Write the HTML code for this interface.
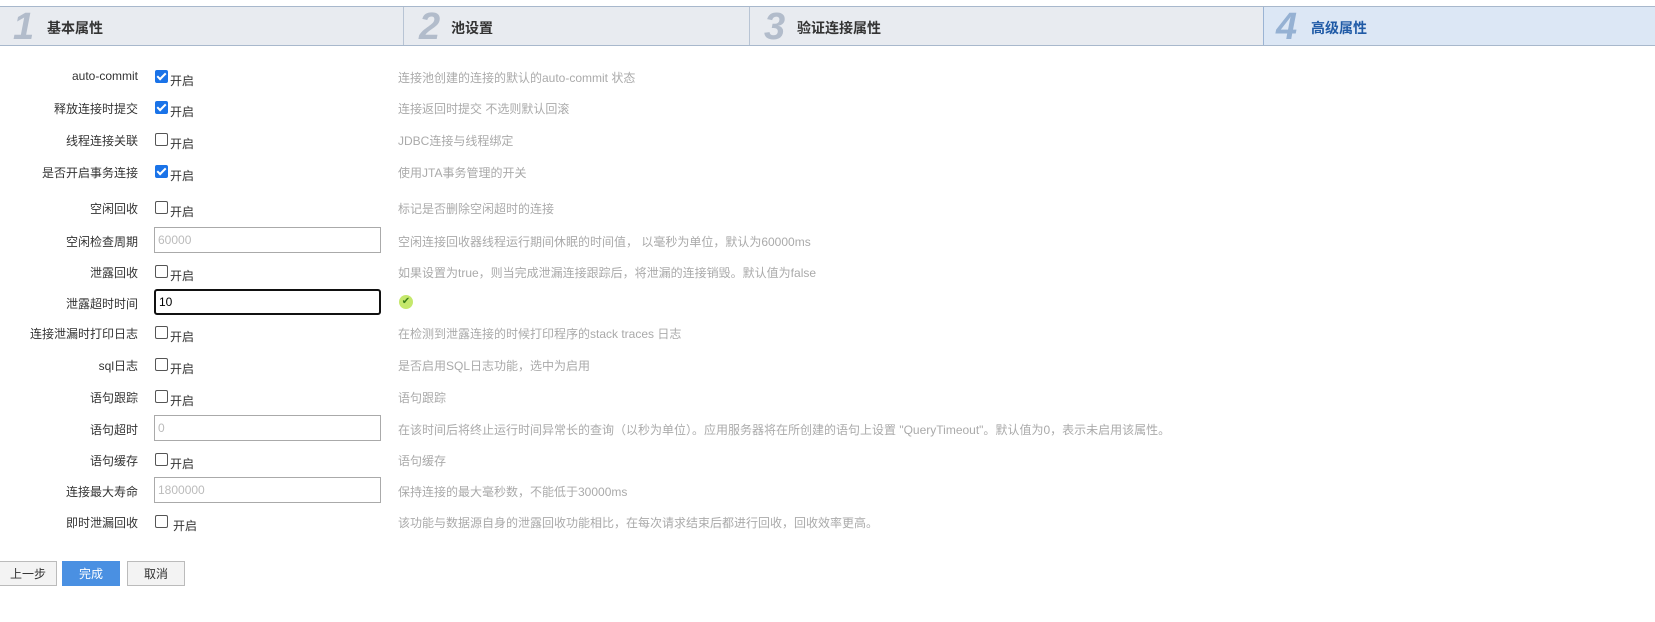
<!DOCTYPE html>
<html><head><meta charset="utf-8"><style>
body{margin:0;width:1655px;height:622px;background:#fff;font-family:"Liberation Sans","Noto Sans CJK SC",sans-serif;font-size:12px;color:#333;position:relative;overflow:hidden}
.hdr{position:absolute;left:0;top:6px;width:1655px;height:38px;background:#e8ebf0;border-top:1px solid #a8b8cc;border-bottom:1px solid #a8b8cc}
.act{position:absolute;left:1263px;top:0;right:0;height:38px;background:#dce7f5;border-left:1px solid #9bb4d4}
.div{position:absolute;top:0;width:1px;height:38px;background:#b8c4d4}
.num{position:absolute;top:1px;font:italic bold 38px "Liberation Sans",sans-serif;color:#b2bccb;line-height:38px}
.st{position:absolute;top:11px;font-size:14px;font-weight:bold;color:#333}
.row{position:absolute;left:0;width:1655px;height:20px}
.lb{position:absolute;right:1517px;top:0;white-space:nowrap;color:#333}
.cb{position:absolute;left:155px;top:1px;width:11px;height:11px;border:1px solid #555;border-radius:2px;background:#fff}
.cb.on{background:#1a73e8;border-color:#1a73e8}
.cb.on:after{content:"";position:absolute;left:3px;top:0px;width:3px;height:7px;border:solid #fff;border-width:0 2px 2px 0;transform:rotate(45deg)}
.kq{position:absolute;left:170px;top:3px}
.ds{position:absolute;left:398px;top:0;color:#aaa;white-space:nowrap}
.in{position:absolute;left:154px;top:-6px;border:1px solid #aaa;color:#bbb;font-size:12px;line-height:24px;padding-left:3px;box-sizing:border-box;width:227px;height:26px}
.btn{position:absolute;top:561px;height:25px;line-height:25px;text-align:center;border:1px solid #bbb;background:#f3f3f3;box-sizing:border-box;color:#333;width:58px}
</style></head><body>
<div class="hdr">
<div class="act"></div>
<div class="div" style="left:403px"></div><div class="div" style="left:749px"></div>
<div class="num" style="left:13px">1</div><div class="st" style="left:47px">基本属性</div>
<div class="num" style="left:419px">2</div><div class="st" style="left:451px">池设置</div>
<div class="num" style="left:764px">3</div><div class="st" style="left:797px">验证连接属性</div>
<div class="num" style="left:1276px;color:#95b1d3">4</div><div class="st" style="left:1311px;color:#1f5aa6">高级属性</div>
</div>

<div class="row" style="top:69px"><span class="lb">auto-commit</span><span class="cb on"></span><span class="kq">开启</span><span class="ds">连接池创建的连接的默认的auto-commit 状态</span></div>
<div class="row" style="top:100px"><span class="lb">释放连接时提交</span><span class="cb on"></span><span class="kq">开启</span><span class="ds">连接返回时提交 不选则默认回滚</span></div>
<div class="row" style="top:132px"><span class="lb">线程连接关联</span><span class="cb"></span><span class="kq">开启</span><span class="ds">JDBC连接与线程绑定</span></div>
<div class="row" style="top:164px"><span class="lb">是否开启事务连接</span><span class="cb on"></span><span class="kq">开启</span><span class="ds">使用JTA事务管理的开关</span></div>
<div class="row" style="top:200px"><span class="lb">空闲回收</span><span class="cb"></span><span class="kq">开启</span><span class="ds">标记是否删除空闲超时的连接</span></div>
<div class="row" style="top:233px"><span class="lb">空闲检查周期</span><div class="in">60000</div><span class="ds">空闲连接回收器线程运行期间休眠的时间值， 以毫秒为单位，默认为60000ms</span></div>
<div class="row" style="top:264px"><span class="lb">泄露回收</span><span class="cb"></span><span class="kq">开启</span><span class="ds">如果设置为true，则当完成泄漏连接跟踪后，将泄漏的连接销毁。默认值为false</span></div>
<div class="row" style="top:295px"><span class="lb">泄露超时时间</span><div class="in" style="border:2px solid #111;border-radius:3px;color:#000;line-height:22px">10</div><span style="position:absolute;left:399px;top:0;width:14px;height:14px;border-radius:50%;background:#c5e86c;color:#3a7d1a;font-size:10px;line-height:14px;text-align:center">✔</span></div>
<div class="row" style="top:325px"><span class="lb">连接泄漏时打印日志</span><span class="cb"></span><span class="kq">开启</span><span class="ds">在检测到泄露连接的时候打印程序的stack traces 日志</span></div>
<div class="row" style="top:357px"><span class="lb">sql日志</span><span class="cb"></span><span class="kq">开启</span><span class="ds">是否启用SQL日志功能，选中为启用</span></div>
<div class="row" style="top:389px"><span class="lb">语句跟踪</span><span class="cb"></span><span class="kq">开启</span><span class="ds">语句跟踪</span></div>
<div class="row" style="top:421px"><span class="lb">语句超时</span><div class="in">0</div><span class="ds">在该时间后将终止运行时间异常长的查询（以秒为单位）。应用服务器将在所创建的语句上设置 "QueryTimeout"。默认值为0，表示未启用该属性。</span></div>
<div class="row" style="top:452px"><span class="lb">语句缓存</span><span class="cb"></span><span class="kq">开启</span><span class="ds">语句缓存</span></div>
<div class="row" style="top:483px"><span class="lb">连接最大寿命</span><div class="in">1800000</div><span class="ds">保持连接的最大毫秒数，不能低于30000ms</span></div>
<div class="row" style="top:514px"><span class="lb">即时泄漏回收</span><span class="cb"></span><span class="kq" style="left:173px">开启</span><span class="ds">该功能与数据源自身的泄露回收功能相比，在每次请求结束后都进行回收，回收效率更高。</span></div>

<div class="btn" style="left:-1px">上一步</div>
<div class="btn" style="left:62px;background:#4a90e2;border-color:#4a90e2;color:#fff">完成</div>
<div class="btn" style="left:127px">取消</div>
</body></html>
